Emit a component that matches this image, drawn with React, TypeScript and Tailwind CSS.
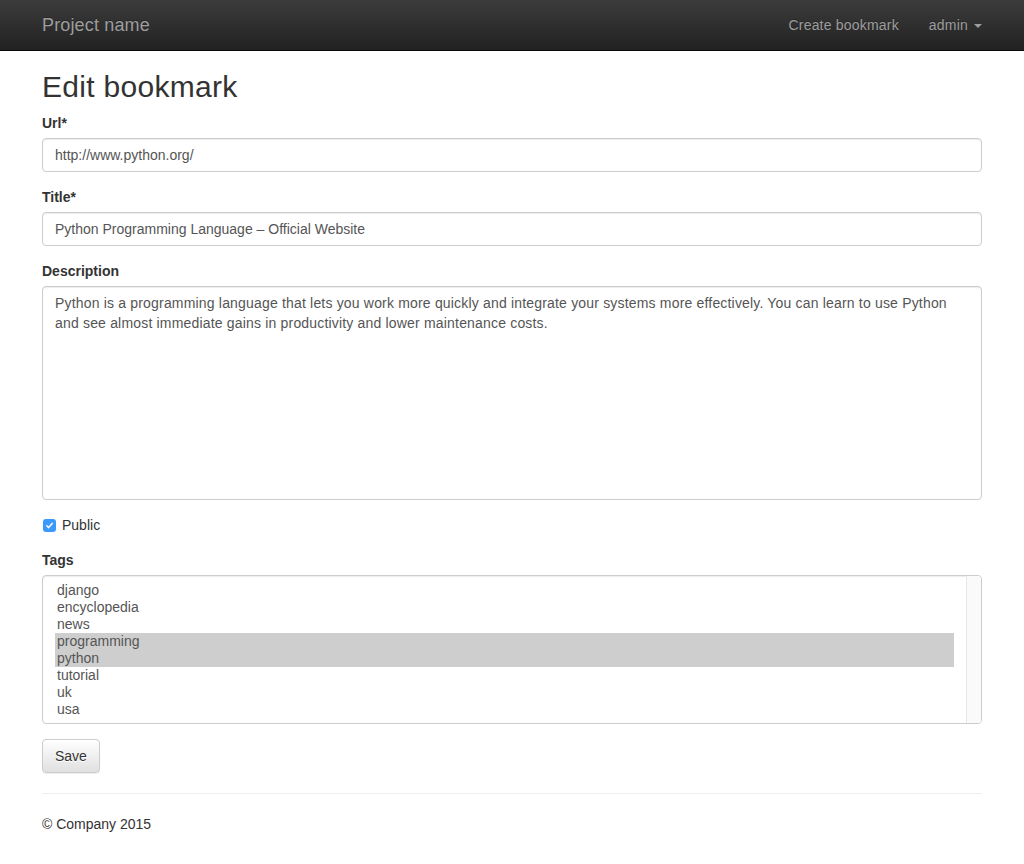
const TAGS = ['django', 'encyclopedia', 'news', 'programming', 'python', 'tutorial', 'uk', 'usa'];
const SELECTED = ['programming', 'python'];

const inputCls =
  'block h-[34px] w-full rounded border border-[#ccc] bg-white px-3 py-1.5 text-sm leading-5 text-[#555] shadow-[inset_0_1px_1px_rgba(0,0,0,0.075)] outline-none';

function Label({ children }: { children: React.ReactNode }) {
  return <label className="mb-[5px] block h-5 font-bold leading-5">{children}</label>;
}

export default function App() {
  return (
    <div className="min-h-screen bg-white font-['Liberation_Sans',Arial,sans-serif] text-sm leading-5 text-[#333]">
      <nav className="h-[51px] border-b border-[#080808] bg-linear-to-b from-[#3c3c3c] to-[#222]">
        <div className="mx-auto flex h-[50px] w-[940px] items-center justify-between">
          <a className="text-lg leading-5 tracking-[0.15px] text-[#9d9d9d] [text-shadow:0_-1px_0_rgba(0,0,0,0.25)]">Project name</a>
          <div className="flex items-center gap-[30px] tracking-[0.2px] text-[#9d9d9d] [text-shadow:0_-1px_0_rgba(0,0,0,0.25)]">
            <a>Create bookmark</a>
            <a className="flex items-center">
              admin
              <span className="ml-[6px] mt-[2px] h-0 w-0 border-x-4 border-t-4 border-x-transparent border-t-[#9d9d9d]" />
            </a>
          </div>
        </div>
      </nav>

      <main className="mx-auto w-[940px]">
        <h2 className="mb-2.5 mt-[19px] text-[30px] font-medium leading-[33px] tracking-[0.3px]">Edit bookmark</h2>

        <div className="mb-[15px]">
          <Label>Url*</Label>
          <input className={inputCls} defaultValue="http://www.python.org/" />
        </div>

        <div className="mb-[15px]">
          <Label>Title*</Label>
          <input className={inputCls} defaultValue="Python Programming Language – Official Website" />
        </div>

        <div className="mb-[15px]">
          <Label>Description</Label>
          <textarea
            className="block h-[214px] w-full resize-none rounded border border-[#ccc] px-3 py-1.5 text-sm leading-5 tracking-[0.18px] text-[#555] shadow-[inset_0_1px_1px_rgba(0,0,0,0.075)] outline-none"
            defaultValue="Python is a programming language that lets you work more quickly and integrate your systems more effectively. You can learn to use Python and see almost immediate gains in productivity and lower maintenance costs."
          />
        </div>

        <div className="mb-[15px] flex h-5 items-center">
          <span className="ml-px mr-[6px] flex h-[13px] w-[13px] items-center justify-center rounded-[3px] bg-[#3b99fc]">
            <svg width="9" height="9" viewBox="0 0 9 9" fill="none">
              <path d="M1.8 4.8 L3.6 6.6 L7.2 2.4" stroke="white" strokeWidth="1.5" strokeLinecap="round" strokeLinejoin="round" />
            </svg>
          </span>
          <span>Public</span>
        </div>

        <div className="mb-[15px]">
          <Label>Tags</Label>
          <div className="flex h-[149px] overflow-hidden rounded border border-[#ccc] shadow-[inset_0_1px_1px_rgba(0,0,0,0.075)]">
            <div className="flex-1 px-3 py-1.5 text-[#555]">
              {TAGS.map((t) => (
                <div
                  key={t}
                  className={`h-[17px] px-0.5 leading-[17px] ${SELECTED.includes(t) ? 'bg-[#cecece]' : ''}`}
                >
                  {t}
                </div>
              ))}
            </div>
            <div className="w-[15px] border-l border-[#e8e8e8] bg-[#fafafa]" />
          </div>
        </div>

        <button className="h-[34px] rounded border border-[#ccc] bg-linear-to-b from-white to-[#e0e0e0] px-3 leading-5 text-[#333] shadow-[inset_0_1px_0_rgba(255,255,255,0.15),0_1px_1px_rgba(0,0,0,0.075)] [text-shadow:0_1px_0_#fff]">
          Save
        </button>

        <hr className="my-5 border-t border-[#eee]" />

        <footer>
          <p>© Company 2015</p>
        </footer>
      </main>
    </div>
  );
}
